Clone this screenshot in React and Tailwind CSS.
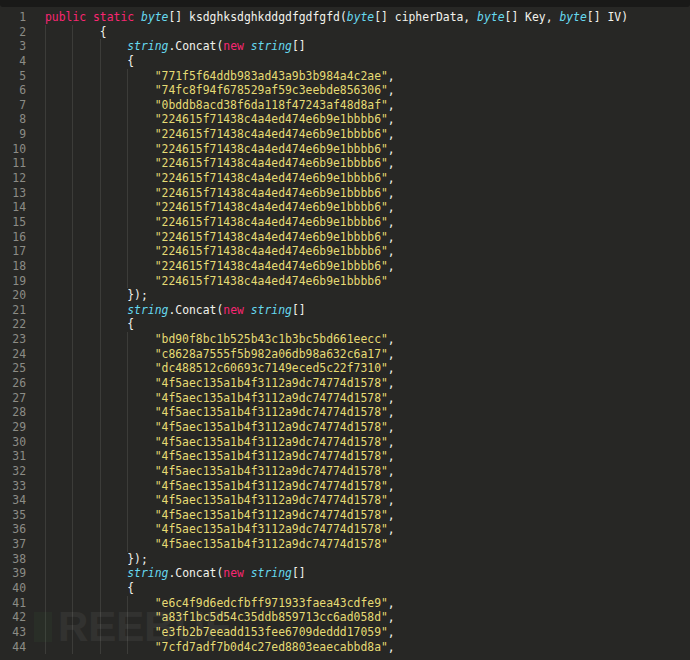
import React from "react";

const K = "text-[#f92672]";
const T = "text-[#66d9ef] italic";
const S = "text-[#e6db74]";

const concat = [
  { t: "string", c: T },
  { t: ".Concat(" },
  { t: "new", c: K },
  { t: " " },
  { t: "string", c: T },
  { t: "[]" },
];

const str = (v, last) => [{ t: `"${v}"`, c: S }, ...(last ? [] : [{ t: "," }])];

const block = (vals) => [
  { indent: 12, parts: concat },
  { indent: 12, parts: [{ t: "{" }] },
  ...vals.map((v, i) => ({ indent: 16, parts: str(v, i === vals.length - 1) })),
];

const firstVals = [
  "771f5f64ddb983ad43a9b3b984a4c2ae",
  "74fc8f94f678529af59c3eebde856306",
  "0bddb8acd38f6da118f47243af48d8af",
  ...Array(12).fill("224615f71438c4a4ed474e6b9e1bbbb6"),
];
const secondVals = [
  "bd90f8bc1b525b43c1b3bc5bd661eecc",
  "c8628a7555f5b982a06db98a632c6a17",
  "dc488512c60693c7149eced5c22f7310",
  ...Array(12).fill("4f5aec135a1b4f3112a9dc74774d1578"),
];
const thirdVals = [
  "e6c4f9d6edcfbff971933faea43cdfe9",
  "a83f1bc5d54c35ddb859713cc6ad058d",
  "e3fb2b7eeadd153fee6709deddd17059",
  "7cfd7adf7b0d4c27ed8803eaecabbd8a",
];
const thirdLines = block(thirdVals);
// the last block keeps going off-screen, so every string has a comma
thirdLines[thirdLines.length - 1] = { indent: 16, parts: str(thirdVals[3], false) };

const lines = [
  {
    indent: 0,
    parts: [
      { t: "public", c: K },
      { t: " " },
      { t: "static", c: K },
      { t: " " },
      { t: "byte", c: T },
      { t: "[] ksdghksdghkddgdfgdfgfd(" },
      { t: "byte", c: T },
      { t: "[] cipherData, " },
      { t: "byte", c: T },
      { t: "[] Key, " },
      { t: "byte", c: T },
      { t: "[] IV)" },
    ],
  },
  { indent: 8, parts: [{ t: "{" }] },
  ...block(firstVals),
  { indent: 12, parts: [{ t: "});" }] },
  ...block(secondVals),
  { indent: 12, parts: [{ t: "});" }] },
  ...thirdLines,
];

const Row = ({ n, line }) => (
  <div className="flex h-[14.65px] leading-[14.65px]">
    <div className="w-[26px] shrink-0 text-right text-[#8c8c86]">{n}</div>
    <div className="ml-[19px] flex whitespace-pre text-[#f2f2ec]">
      {Array.from({ length: line.indent / 4 }).map((_, i) => (
        <span key={i} className="w-[4ch] shrink-0 border-l border-[#3c3c39]" />
      ))}
      {line.parts.map((p, i) => (
        <span key={i} className={p.c}>
          {p.t}
        </span>
      ))}
    </div>
  </div>
);

export default function App() {
  return (
    <div
      className="relative h-[660px] w-[690px] overflow-hidden bg-[#272725] text-[11.4px]"
      style={{ fontFamily: '"DejaVu Sans Mono", monospace' }}
    >
      <div className="h-[7px] rounded-b-[3px] bg-[#191918]" />
      <div className="pt-[3px]">
        {lines.map((l, i) => (
          <Row key={i} n={i + 1} line={l} />
        ))}
      </div>
      {/* faint site watermark */}
      <div
        className="pointer-events-none absolute left-[34px] top-[606px] flex items-center gap-[6px] text-[42px] font-bold leading-none text-white opacity-[0.05]"
        style={{ fontFamily: '"Liberation Sans", sans-serif' }}
      >
        <span className="h-[30px] w-[18px] bg-[#4caf50]" />
        <span>REEBUF</span>
      </div>
    </div>
  );
}
